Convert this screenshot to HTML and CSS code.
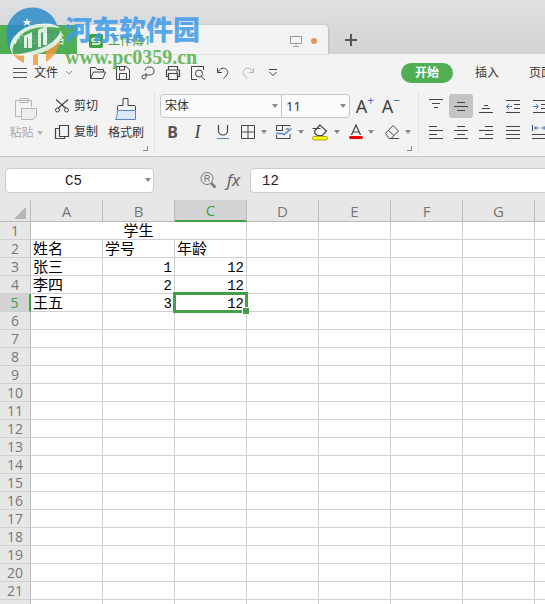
FILE: index.html
```html
<!DOCTYPE html>
<html lang="zh-CN">
<head>
<meta charset="utf-8">
<title>工作簿1</title>
<link rel="stylesheet" href="styles.css">
</head>
<body>
<header class="titlebar">
  <button class="app-tab">WPS 表格</button>
  <div class="doc-tab">
    <svg class="doc-icon" width="14" height="14" viewBox="0 0 14 14"><rect width="14" height="14" rx="2" fill="#3fa142"/><path d="M11 4.500H4.500Q3 4.500 3 6t1.500 1.300h5Q11 7.300 11 8.500T9.500 10H3" fill="none" stroke="#fff" stroke-width="1.300"/></svg>
    <span class="doc-name">工作簿1</span>
    <svg class="screen" width="12" height="12" viewBox="0 0 12 12"><path d="M.5 1.500h11v7H.5zM6 8v2.500M3 11.500h6" fill="none" stroke="#999"/></svg>
    <span class="unsaved"></span>
  </div>
  <button class="new-tab" aria-label="新建"><svg width="14" height="14" viewBox="0 0 14 14"><path d="M7 1v12M1 7h12" stroke="#555" stroke-width="2"/></svg></button>
</header>

<nav class="menubar">
  <button class="file-menu">
    <svg width="14" height="12" viewBox="0 0 14 12"><path d="M0 1.500h14M0 5.500h14M0 10.500h14" stroke="#555"/></svg>
    <span>文件</span>
    <svg width="8" height="6" viewBox="0 0 8 6"><path d="M1 1l3 3 3-3" fill="none" stroke="#888"/></svg>
  </button>
  <div class="quick">
    <button aria-label="打开"><svg width="18" height="16" viewBox="0 0 18 16"><path d="M1.500 13V2.500h5l1.500 2h6.500V7M1.500 13.500L4.500 7h12l-2.500 6.500z"/></svg></button>
    <button aria-label="保存"><svg width="16" height="16" viewBox="0 0 16 16"><path d="M1.500 14.500v-13h9.500l3.500 3v10zM4.500 14.500V8.500h7v6M4.500 1.500V5h5V1.500"/></svg></button>
    <button aria-label="输出"><svg width="16" height="16" viewBox="0 0 16 16"><path d="M5 5.500a4.500 4 0 1 1 4.500 4.500H4a2 2 0 1 0 2 2V8"/></svg></button>
    <button aria-label="打印"><svg width="16" height="16" viewBox="0 0 16 16"><path d="M3.500 5V1.500h9V5M3.500 11.500h-2V5h13v6.500h-2M3.500 8.500h9v6h-9zM11 7h2" stroke-width="1.200"/></svg></button>
    <button aria-label="预览"><svg width="16" height="16" viewBox="0 0 16 16"><path d="M7 14.500H1.500v-13h12V5M11 11.500l4 3.500"/><circle cx="9" cy="8.500" r="3.500"/></svg></button>
    <button aria-label="撤销"><svg width="14" height="14" viewBox="0 0 14 14"><path d="M1.500 2v4.500H6M1.500 6.500C4 2 8 1 10.500 3.500S11.500 9 7.500 12.500"/></svg></button>
    <button aria-label="恢复" class="dim"><svg width="14" height="14" viewBox="0 0 14 14"><path d="M12.500 2v4.500H8M12.500 6.500C10 2 6 1 3.500 3.500S2.500 9 6.500 12.500"/></svg></button>
    <button aria-label="更多"><svg width="10" height="8" viewBox="0 0 10 8"><path d="M1 .5h8M1.500 3L5 6.500 8.500 3"/></svg></button>
  </div>
  <div class="tabs">
    <button class="tab active">开始</button>
    <button class="tab">插入</button>
    <button class="tab">页面布局</button>
  </div>
</nav>

<section class="ribbon">
  <div class="group clipboard">
    <button class="big dim">
      <svg width="24" height="24" viewBox="0 0 24 24"><path d="M7 19.500H1.500V3.500h16V10M6 5.500v-4h8v4z"/><path d="M7.500 11.500h15V19l-3.500 3.500H7.500z" fill="#eee"/></svg>
      <span class="with-arrow">粘贴<i class="arrow"></i></span>
    </button>
    <div class="stack">
      <button><svg width="16" height="16" viewBox="0 0 16 16"><path d="M2 1.500l10 9M14 1.500l-10 9" stroke-width="1.200"/><circle cx="3.500" cy="12" r="2"/><circle cx="12.500" cy="12" r="2"/></svg>剪切</button>
      <button><svg width="16" height="16" viewBox="0 0 16 16"><path d="M5.500 1.500h9v11h-9zM5.500 4.500h-4v10h9v-2" stroke-width="1.200"/></svg>复制</button>
    </div>
    <button class="big">
      <svg width="24" height="24" viewBox="0 0 24 24"><path d="M3.500 13V9.500q0-1 1-1H9v-7h5v7h6.500q1 0 1 1V13"/><path d="M3.500 13.500h18v9h-20q2-2 2-9z" fill="#dce9f8" stroke="#5b84c4"/></svg>
      <span>格式刷</span>
    </button>
    <svg class="launcher" width="6" height="6" viewBox="0 0 6 6"><path d="M0 4.500h4.500V0"/></svg>
  </div>

  <div class="group font">
    <div class="row">
      <div class="combo">
        <label class="pick family"><select aria-label="字体"><option>宋体</option></select></label>
        <label class="pick size"><select aria-label="字号"><option>11</option></select></label>
      </div>
      <button class="grow" aria-label="增大字号">A<sup>+</sup></button>
      <button class="grow" aria-label="减小字号">A<sup>−</sup></button>
    </div>
    <div class="row">
      <button class="sq bold">B</button>
      <button class="sq italic">I</button>
      <button class="sq" aria-label="下划线"><svg width="14" height="16" viewBox="0 0 14 16"><path d="M2.500 1v6a4.500 4 0 0 0 9 0V1" stroke-width="1.200"/><path d="M1 14.500h12" stroke="#5b84c4"/></svg></button>
      <button class="drop" aria-label="边框"><svg width="16" height="16" viewBox="0 0 16 16"><path d="M1.500 1.500h13v13h-13zM8 1.500v13M1.500 8h13"/></svg><i class="arrow"></i></button>
      <button class="drop" aria-label="表格样式"><svg width="18" height="16" viewBox="0 0 18 16"><path d="M15 2.500v-1H1.500v5H8M7.500 1.500v5M1.500 11v3.500H15V10M11 5h3"/><path d="M1 9.500h6l2 1 7.500-6" stroke="#5b84c4" stroke-width="1.500"/></svg><i class="arrow"></i></button>
      <button class="drop" aria-label="填充颜色"><svg width="18" height="17" viewBox="0 0 18 17"><path d="M9 1L3.500 7q0 3 3 4.500h5L15.500 7zM1.500 4.500h8" stroke-width="1.200"/><rect x="1.500" y="12.500" width="15" height="3.500" rx="1.500" fill="#ff0" stroke="#aa3"/></svg><i class="arrow"></i></button>
      <button class="drop" aria-label="字体颜色"><svg width="14" height="16" viewBox="0 0 14 16"><path d="M2.500 11L7 1l4.500 10M4 8h6" stroke-width="1.200"/><path d="M1.500 13.500h11" stroke="#e00" stroke-width="3" stroke-linecap="round"/></svg><i class="arrow"></i></button>
      <button class="drop" aria-label="清除"><svg width="16" height="16" viewBox="0 0 16 16"><path d="M1.500 9.500L9 1.500l5.500 5.500-7.500 7.500H5zM4.500 6.500L10 11.500M7 14.500h8"/></svg><i class="arrow"></i></button>
    </div>
    <svg class="launcher" width="6" height="6" viewBox="0 0 6 6"><path d="M0 4.500h4.500V0"/></svg>
  </div>

  <div class="group align">
    <button aria-label="顶端对齐"><svg width="14" height="16" viewBox="0 0 14 16"><path d="M0 1.500h14M3 5.500h8M5 9.500h4"/></svg></button>
    <button aria-label="垂直居中" class="on"><svg width="14" height="16" viewBox="0 0 14 16"><path d="M3 4.500h8M0 8.500h14M3 12.500h8"/></svg></button>
    <button aria-label="底端对齐"><svg width="14" height="16" viewBox="0 0 14 16"><path d="M5 7.500h4M3 10.500h8M0 14.500h14"/></svg></button>
    <button aria-label="减少缩进"><svg width="16" height="16" viewBox="0 0 16 16"><path d="M1 2.500h14M9 6.500h6M9 10.500h6M1 14.500h14"/><path d="M7 8.500H1.500M4 6L1.500 8.500 4 11" stroke="#4472c4"/></svg></button>
    <button aria-label="增加缩进"><svg width="16" height="16" viewBox="0 0 16 16"><path d="M1 2.500h14M9 6.500h6M9 10.500h6M1 14.500h14"/><path d="M1 8.500h5.500M4 6l2.500 2.500L4 11" stroke="#4472c4"/></svg></button>
    <button aria-label="左对齐"><svg width="14" height="16" viewBox="0 0 14 16"><path d="M0 2.500h8M0 6.500h14M0 10.500h8M0 14.500h14"/></svg></button>
    <button aria-label="居中"><svg width="14" height="16" viewBox="0 0 14 16"><path d="M3 2.500h8M0 6.500h14M3 10.500h8M0 14.500h14"/></svg></button>
    <button aria-label="右对齐"><svg width="14" height="16" viewBox="0 0 14 16"><path d="M6 2.500h8M0 6.500h14M6 10.500h8M0 14.500h14"/></svg></button>
    <button aria-label="两端对齐"><svg width="14" height="16" viewBox="0 0 14 16"><path d="M0 2.500h14M0 6.500h14M0 10.500h14M0 14.500h14"/></svg></button>
    <button aria-label="分散对齐"><svg width="16" height="16" viewBox="0 0 16 16"><path d="M.5 1v6M15.500 1v6M0 10.500h16M0 14.500h16"/><path d="M7 4H2.500M4.500 2l-2 2 2 2M9 4h4.500M11.500 2l2 2-2 2" stroke="#4472c4"/></svg></button>
  </div>
</section>

<section class="formula">
  <label class="pick name-box"><input type="text" aria-label="名称框" value="C5"></label>
  <button aria-label="查找"><svg width="18" height="18" viewBox="0 0 18 18"><circle cx="8" cy="7.500" r="6"/><path d="M6 11V4.500h3q1.500 0 1.500 1.500T9 7.500H6M8.500 7.500l2 3"/><path d="M12 12l4.500 4.500" stroke-width="2.500"/></svg></button>
  <button class="fx">fx</button>
  <input class="content" type="text" aria-label="编辑栏" value="12">
</section>

<main class="sheet">
<table>
  <colgroup><col class="rows"><col><col><col><col><col><col><col><col></colgroup>
  <thead><tr><th class="corner"><svg width="12" height="12" viewBox="0 0 12 12"><path d="M12 0v12H0z" fill="#b5b5b5"/></svg></th><th>A</th><th>B</th><th class="on">C</th><th>D</th><th>E</th><th>F</th><th>G</th><th></th></tr></thead>
  <tbody>
  <tr><th>1</th><td colspan="3" class="mid">学生</td><td></td><td></td><td></td><td></td><td></td></tr>
  <tr><th>2</th><td>姓名</td><td>学号</td><td>年龄</td><td></td><td></td><td></td><td></td><td></td></tr>
  <tr><th>3</th><td>张三</td><td class="num">1</td><td class="num">12</td><td></td><td></td><td></td><td></td><td></td></tr>
  <tr><th>4</th><td>李四</td><td class="num">2</td><td class="num">12</td><td></td><td></td><td></td><td></td><td></td></tr>
  <tr><th class="on">5</th><td>王五</td><td class="num">3</td><td class="num selected">12</td><td></td><td></td><td></td><td></td><td></td></tr>
  <tr><th>6</th><td></td><td></td><td></td><td></td><td></td><td></td><td></td><td></td></tr>
  <tr><th>7</th><td></td><td></td><td></td><td></td><td></td><td></td><td></td><td></td></tr>
  <tr><th>8</th><td></td><td></td><td></td><td></td><td></td><td></td><td></td><td></td></tr>
  <tr><th>9</th><td></td><td></td><td></td><td></td><td></td><td></td><td></td><td></td></tr>
  <tr><th>10</th><td></td><td></td><td></td><td></td><td></td><td></td><td></td><td></td></tr>
  <tr><th>11</th><td></td><td></td><td></td><td></td><td></td><td></td><td></td><td></td></tr>
  <tr><th>12</th><td></td><td></td><td></td><td></td><td></td><td></td><td></td><td></td></tr>
  <tr><th>13</th><td></td><td></td><td></td><td></td><td></td><td></td><td></td><td></td></tr>
  <tr><th>14</th><td></td><td></td><td></td><td></td><td></td><td></td><td></td><td></td></tr>
  <tr><th>15</th><td></td><td></td><td></td><td></td><td></td><td></td><td></td><td></td></tr>
  <tr><th>16</th><td></td><td></td><td></td><td></td><td></td><td></td><td></td><td></td></tr>
  <tr><th>17</th><td></td><td></td><td></td><td></td><td></td><td></td><td></td><td></td></tr>
  <tr><th>18</th><td></td><td></td><td></td><td></td><td></td><td></td><td></td><td></td></tr>
  <tr><th>19</th><td></td><td></td><td></td><td></td><td></td><td></td><td></td><td></td></tr>
  <tr><th>20</th><td></td><td></td><td></td><td></td><td></td><td></td><td></td><td></td></tr>
  <tr><th>21</th><td></td><td></td><td></td><td></td><td></td><td></td><td></td><td></td></tr>
  <tr><th>22</th><td></td><td></td><td></td><td></td><td></td><td></td><td></td><td></td></tr>
  </tbody>
</table>
</main>

<div class="watermark">
  <svg width="60" height="58" viewBox="0 0 60 58">
    <path d="M3 29A26 26 0 0 1 54 18Q32 12 18 22T7 42Q3 37 3 29z" fill="#2f8dcb"/>
    <path d="M56 24Q57 42 42 52V36h-8v19h-5V38h-9v15Q12 49 9 44q20 2 32-5T56 24z" fill="#f09a3c"/>
    <path d="M55 21Q60 29 46 37T10 42Q10 32 20 25T55 21z" fill="#4aa06a"/>
    <path d="M56 18Q27 14 16 26T10 45Q2 38 10 27T34 14t22 4z" fill="#f4faf6"/>
    <path d="M57 20Q60 32 44 40T10 45Q30 42 42 36T57 20z" fill="#f4faf6"/>
    <path d="M20 38V26l8-4v16h-4V27l-1 1v10zM34 37V20l9-4v19h-4V22l-2 1v14z" fill="#f4faf6"/>
    <path d="M23 8l1 3h3l-2 2 1 3-3-2-3 2 1-3-2-2h3z" fill="#fff"/>
  </svg>
  <div class="words"><strong>河东软件园</strong><span>www.pc0359.cn</span></div>
</div>
</body>
</html>
```
FILE: styles.css
```css
* { box-sizing: border-box; }
body {
  margin: 0;
  height: 100vh;
  overflow: hidden;
  display: flex;
  flex-direction: column;
  position: relative;
  background: #f3f3f3;
  color: #333;
  font: 12px/16px "Noto Sans", "Noto Sans CJK SC", sans-serif;
}
button, input, select { font: inherit; color: inherit; }
button {
  flex: none;
  display: flex;
  align-items: center;
  justify-content: center;
  padding: 0;
  border: 0;
  background: none;
  white-space: nowrap;
}
svg { display: block; flex: none; overflow: visible; }
button svg, .launcher { fill: none; stroke: #444; }
.dim { color: #aaa; }
.dim svg { stroke: #b5b5b5; }
.arrow {
  border: 3px solid transparent;
  border-top: 4px solid #888;
  border-bottom: 0;
}
.with-arrow { display: flex; align-items: center; gap: 3px; }
.dim .arrow { border-top-color: #b5b5b5; }

/* Title bar */
.titlebar {
  flex: none;
  display: flex;
  align-items: flex-end;
  height: 54px;
  background: linear-gradient(#dfe0e2, #d2d3d5);
}
.app-tab {
  width: 77px;
  height: 29px;
  background: #50ae55;
  color: #e4f3e4;
  font-size: 12px;
}
.doc-tab {
  display: flex;
  align-items: center;
  width: 251px;
  height: 29px;
  padding: 2px 11px 0 12px;
  border-radius: 0 4px 0 0;
  background: #f3f3f3;
  box-shadow: 1px 0 2px #bbb;
}
.doc-name { margin-left: 5px; color: #3fa142; font-size: 12px; }
.screen { margin-left: auto; }
.unsaved { width: 6px; height: 6px; margin-left: 9px; border-radius: 50%; background: #e09a50; }
.new-tab { width: 46px; height: 28px; }

/* Menu bar */
.menubar { flex: none; display: flex; align-items: center; height: 38px; overflow: hidden; }
.file-menu { justify-content: flex-start; gap: 7px; width: 85px; padding-left: 13px; }
.quick { flex: none; display: flex; }
.quick button { width: 25px; height: 24px; }
.tabs { flex: none; display: flex; gap: 2px; margin-left: 116px; }
.tab { height: 20px; padding: 0 14px; border-radius: 10px; }
.active { margin-right: 6px; background: #50ae55; color: #fff; font-weight: bold; }

/* Ribbon */
.ribbon {
  flex: none;
  display: flex;
  height: 65px;
  overflow: hidden;
  border-bottom: 1px solid #c8c8c8;
}
.group { flex: none; position: relative; height: 62px; padding-top: 2px; }
.group + .group { border-left: 1px solid #e2e2e2; }
.launcher { position: absolute; right: 5px; bottom: 2px; stroke: #888; }
.clipboard { display: flex; width: 154px; padding-left: 8px; }
.big { flex-direction: column; justify-content: flex-start; gap: 3px; width: 36px; height: 50px; padding-top: 3px; line-height: 18px; }
.stack { display: grid; grid-template-rows: 24px 24px; gap: 2px; width: 64px; padding-left: 10px; }
.stack button { justify-content: flex-start; gap: 4px; }
.font { width: 264px; padding-left: 5px; }
.row { display: flex; height: 24px; margin-bottom: 2px; }
.combo {
  display: flex;
  width: 190px;
  margin-right: 2px;
  border: 1px solid #c6c6c6;
  border-radius: 4px;
  background: #fbfbfb;
}
.pick { position: relative; display: flex; }
.pick::after {
  content: "";
  position: absolute;
  right: 3px;
  top: 50%;
  margin-top: -2px;
  border: 3px solid transparent;
  border-top: 4px solid #888;
  border-bottom: 0;
  pointer-events: none;
}
.pick select { width: 100%; padding: 0 4px; border: 0; outline: 0; background: none; appearance: none; }
.family { flex: 1; }
.size { width: 68px; border-left: 1px solid #c6c6c6; }
.size select { font-size: 13px; }
.grow { width: 26px; font-size: 18px; color: #444; }
.grow sup { align-self: flex-start; color: #4472c4; font-size: 12px; line-height: 14px; }
.sq { width: 25px; }
.bold { font: bold 16px/24px "Noto Sans", sans-serif; color: #555; }
.italic { font: italic 18px/24px "Liberation Serif", serif; color: #444; }
.drop { width: 36px; gap: 5px; }
.align {
  display: grid;
  grid-template-columns: repeat(3, 24px) 28px 24px;
  grid-template-rows: 24px 24px;
  column-gap: 1px;
  row-gap: 2px;
  padding-left: 5px;
}
.on { border-radius: 3px; background: #c4c4c4; }

/* Formula bar */
.formula {
  flex: none;
  display: flex;
  align-items: center;
  height: 43px;
  padding: 3px 0 0 5px;
  background: #e7e7e7;
  font-family: "Liberation Mono", "Noto Sans CJK SC", monospace;
}
.name-box { width: 149px; margin-right: 45px; }
.formula input {
  height: 25px;
  min-width: 0;
  border: 1px solid #ccc;
  border-radius: 4px;
  outline: 0;
  background: #fff;
  color: #222;
  font-size: 14px;
}
.name-box input { width: 100%; padding: 2px 12px 0 0; text-align: center; }
.formula svg { stroke: #777; }
.fx { width: 33px; font: italic 17px/20px "Noto Sans", sans-serif; color: #666; }
.formula .content { flex: 1; padding: 2px 11px 0; border-right: 0; border-radius: 4px 0 0 4px; }

/* Sheet */
.sheet { flex: 1; min-height: 0; overflow: hidden; background: #fff; }
table { width: 607px; table-layout: fixed; border-collapse: separate; border-spacing: 0; }
col { width: 72px; }
.rows { width: 31px; }
th, td { height: 18px; padding: 0; border: solid #d0d0d0; border-width: 0 1px 1px 0; }
th { background: #e7e7e7; color: #777; font: 14px/17px "Open Sans", "Noto Sans", sans-serif; }
thead th { height: 22px; font-size: 15px; line-height: 20px; border-color: #bbb; }
tbody th { border-right-color: #bbb; }
.corner svg { margin: 4px 0 0 14px; }
td {
  padding: 4px 2px 0;
  color: #000;
  font: 15px/13px "Liberation Mono", "Noto Sans CJK SC", monospace;
  white-space: nowrap;
}
.mid { text-align: center; }
.num { text-align: right; font-size: 14px; }
th.on { border-radius: 0; background: #d3d3d3; color: #43a047; }
thead th.on { border-bottom: 2px solid #43a047; line-height: 19px; }
tbody th.on { border-right: 2px solid #43a047; }
.selected { position: relative; }
.selected::before {
  content: "";
  position: absolute;
  inset: -2px;
  border: 3px solid #43a047;
}
.selected::after {
  content: "";
  position: absolute;
  right: -3px;
  bottom: -3px;
  width: 6px;
  height: 6px;
  border: solid #fff;
  border-width: 1px 0 0 1px;
  background: #43a047;
}

/* Watermark */
.watermark {
  position: absolute;
  left: 4px;
  top: 10px;
  display: flex;
  gap: 1px;
  opacity: 0.85;
  pointer-events: none;
}
.words { display: flex; flex-direction: column; }
.words strong { color: #3f9bea; font: 900 27px/38px "Noto Sans CJK SC", sans-serif; }
.words span { color: #55b04a; font: bold 20px/18px "Liberation Serif", serif; }
```
